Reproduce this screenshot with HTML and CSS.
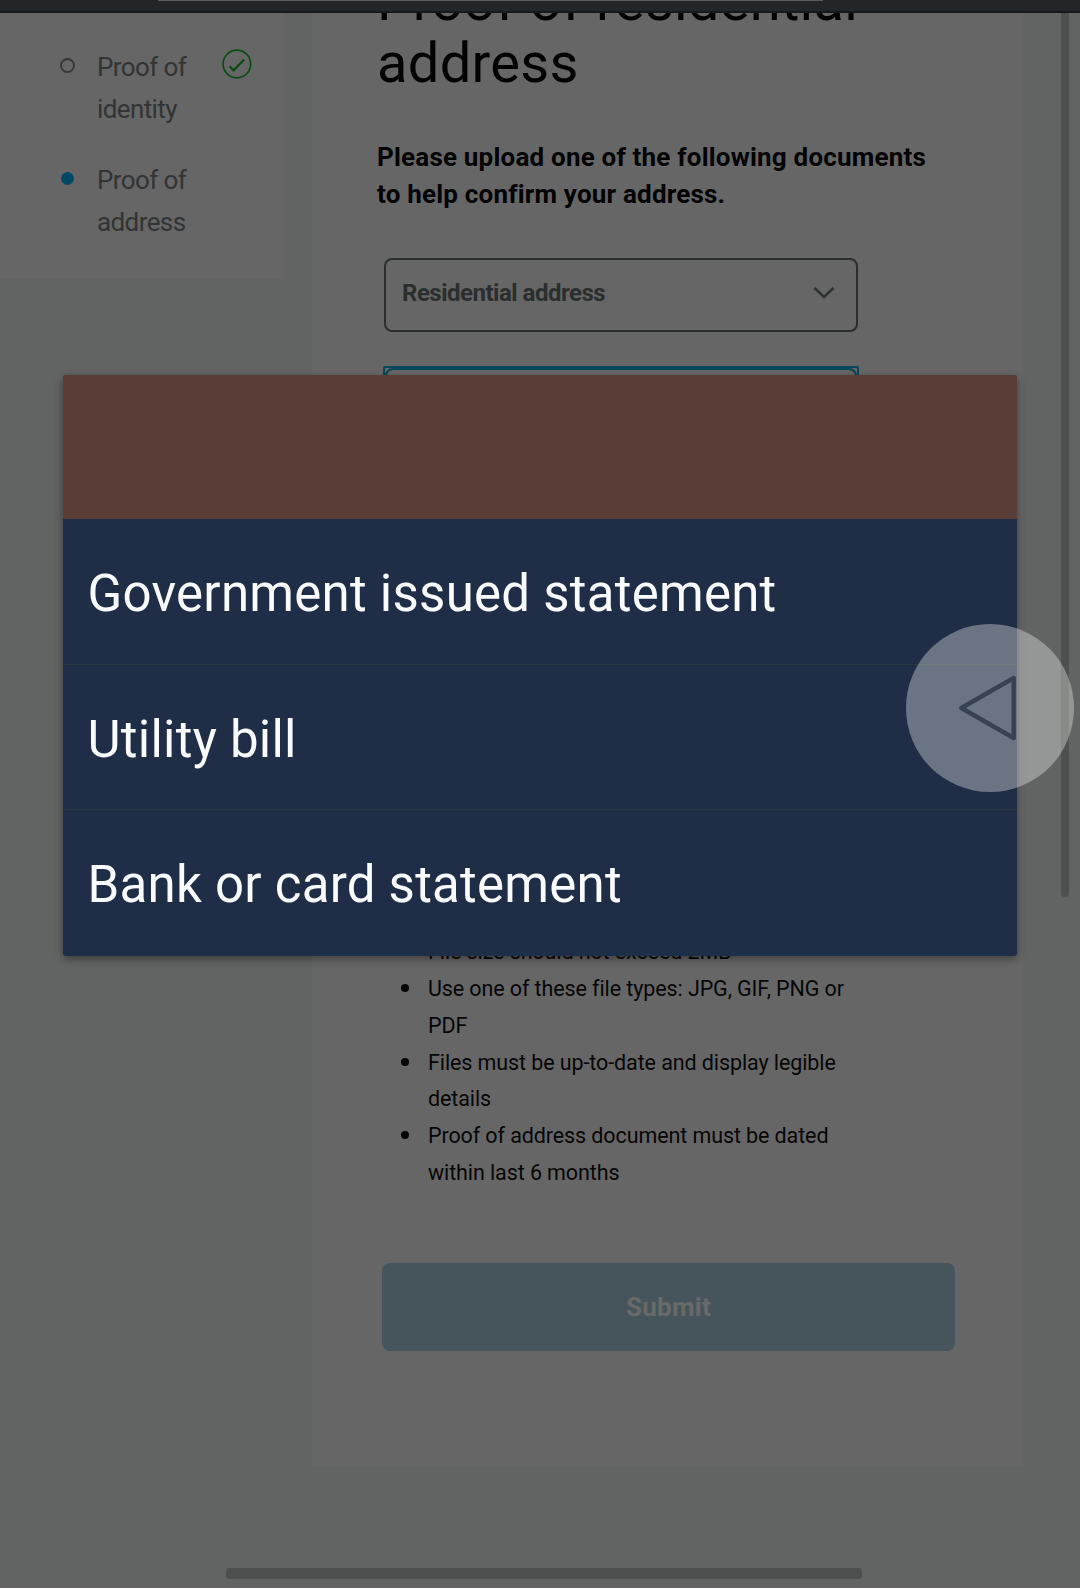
FILE: index.html
```html
<!DOCTYPE html>
<html lang="en">
<head>
    <meta charset="UTF-8">
    <meta name="viewport" content="width=device-width, initial-scale=1.0">
    <title>Proof of residential address</title>
    <link rel="stylesheet" href="styles.css">
</head>
<body>
    <div class="browser-bar"><div class="url-field"></div></div>
    <div class="page">
        <div class="sidebar">
            <div class="step">
                <span class="dot"></span>
                <span class="step-name">Proof of identity</span>
                <svg class="check" width="30" height="30" viewBox="0 0 30 30">
                    <circle cx="15" cy="15" r="13.9"/>
                    <path class="tick" d="M7.7 17.2l4 4.1L22.3 10.5"/>
                </svg>
            </div>
            <div class="step">
                <span class="dot active"></span>
                <span class="step-name">Proof of address</span>
            </div>
        </div>
        <div class="main">
            <h1>Proof of residential address</h1>
            <p class="intro">Please upload one of the following documents to help confirm your address.</p>
            <div class="select">
                <span>Residential address</span>
                <svg width="22" height="14" viewBox="0 0 22 14">
                    <path d="M1.5 2l9.5 9L20.5 2"/>
                </svg>
            </div>
            <div class="select-focus"><div class="select open"></div></div>
            <ul class="rules">
                <li>File size should not exceed 2MB</li>
                <li>Use one of these file types: JPG, GIF, PNG or PDF</li>
                <li>Files must be up-to-date and display legible details</li>
                <li>Proof of address document must be dated within last 6 months</li>
            </ul>
            <button class="submit" disabled>Submit</button>
        </div>
    </div>

    <div class="scroll-v"></div>
    <div class="scroll-h"></div>

    <div class="options">
        <div class="option selected"></div>
        <div class="option">Government issued statement</div>
        <div class="option">Utility bill</div>
        <div class="option">Bank or card statement</div>
    </div>

    <div class="back-button">
        <svg width="168" height="168" viewBox="0 0 168 168">
            <path d="M55.3 84L107.7 54V114Z"/>
        </svg>
    </div>
</body>
</html>
```

FILE: styles.css
```css
* {
    box-sizing: border-box;
}
body {
    margin: 0;
    height: 1588px;
    position: relative;
    overflow: hidden;
    font-family: Roboto, sans-serif;
    background: #616462;
}
.browser-bar {
    height: 13px;
    padding-left: 158px;
    background: #232629;
    border-bottom: 2px solid #17191b;
}
.url-field {
    width: 665px;
    height: 1px;
    background: #5b5e60;
}
.page {
    display: flex;
    align-items: flex-start;
    gap: 28px;
    height: 1575px;
    overflow: hidden;
}

/* Steps */
.sidebar {
    width: 284px;
    height: 266px;
    padding: 33px 32px 0 60px;
    background: #666;
}
.step {
    display: flex;
    margin-bottom: 28px;
}
.dot {
    width: 15px;
    height: 15px;
    margin: 12px 22px 0 0;
    border: 2px solid #363838;
    border-radius: 50%;
}
.dot.active {
    width: 13px;
    height: 13px;
    margin: 13px 23px 0 1px;
    border: none;
    background: #004a67;
}
.step-name {
    width: 100px;
    margin-right: 26px;
    font-size: 26px;
    line-height: 42.3px;
    letter-spacing: -0.6px;
    color: #313434;
}
.check {
    margin-top: 3px;
}
.check circle,
.check path {
    fill: none;
    stroke: #0b4b13;
    stroke-width: 1.7;
}
.check .tick {
    stroke-width: 2.3;
}

/* Form */
.main {
    width: 711px;
    height: 1453px;
    padding: 0 65px;
    overflow: hidden;
    background: #666;
}
h1 {
    margin: -43px 0 45px;
    font-size: 56px;
    font-weight: 400;
    line-height: 62px;
    letter-spacing: 0.3px;
    color: #020202;
}
.intro {
    width: 560px;
    margin: 0 0 45px;
    font-size: 26px;
    font-weight: 700;
    line-height: 37px;
    letter-spacing: 0.2px;
    color: #020202;
}
.select {
    display: flex;
    align-items: center;
    justify-content: space-between;
    width: 474px;
    height: 74px;
    margin-left: 7px;
    padding: 0 21px 4px 16px;
    border: 2px solid #2b2e2e;
    border-radius: 8px;
    font-size: 24px;
    font-weight: 700;
    letter-spacing: -0.5px;
    color: #2b2e2e;
}
.select path {
    fill: none;
    stroke: #303333;
    stroke-width: 2.6;
}
.select-focus {
    width: 476px;
    height: 76px;
    margin: 34px 0 0 6px;
    border: 2px solid #07475a;
    border-radius: 2px;
}
.select.open {
    width: 472px;
    height: 72px;
    margin: 0;
    border-color: #07475a;
}
.rules {
    width: 450px;
    margin: 492px 0 0 24px;
    padding: 0 0 0 27px;
    list-style: none;
    font-size: 21.5px;
    line-height: 36.85px;
    letter-spacing: -0.1px;
    color: #060606;
}
.rules li {
    position: relative;
}
.rules li::before {
    content: "";
    position: absolute;
    left: -27px;
    top: 13px;
    width: 8px;
    height: 8px;
    border-radius: 50%;
    background: #060606;
}
.submit {
    display: block;
    width: 573px;
    height: 88px;
    margin: 71px 0 0 5px;
    border: none;
    border-radius: 8px;
    background: #45555b;
    font-family: inherit;
    font-size: 26px;
    font-weight: 700;
    letter-spacing: 0.3px;
    color: #696969;
}

/* Scrollbars */
.scroll-v {
    position: absolute;
    top: 13px;
    left: 1061px;
    width: 8px;
    height: 884px;
    border-radius: 0 0 4px 4px;
    background: #4e504f;
}
.scroll-h {
    position: absolute;
    left: 226px;
    top: 1568px;
    width: 636px;
    height: 11px;
    border-radius: 3px;
    background: #4e504f;
}

/* Dropdown options */
.options {
    position: absolute;
    left: 63px;
    top: 375px;
    width: 954px;
    border-radius: 3px;
    overflow: hidden;
    background: #202d47;
    box-shadow: 0 3px 8px rgba(0, 0, 0, 0.4);
}
.option {
    height: 145.5px;
    padding-left: 24.5px;
    border-bottom: 1px solid #2b363f;
    font-size: 51px;
    line-height: 150.4px;
    letter-spacing: 0.25px;
    color: #fafbff;
}
.option.selected {
    height: 144px;
    border: none;
    background: #5a3d37;
}
.option:last-child {
    border: none;
}

.back-button {
    position: absolute;
    left: 906px;
    top: 624px;
    width: 168px;
    height: 168px;
    border-radius: 50%;
    background: rgba(235, 240, 236, 0.37);
}
.back-button path {
    fill: none;
    stroke: #374354;
    stroke-width: 4.5;
    stroke-linejoin: round;
}
```
